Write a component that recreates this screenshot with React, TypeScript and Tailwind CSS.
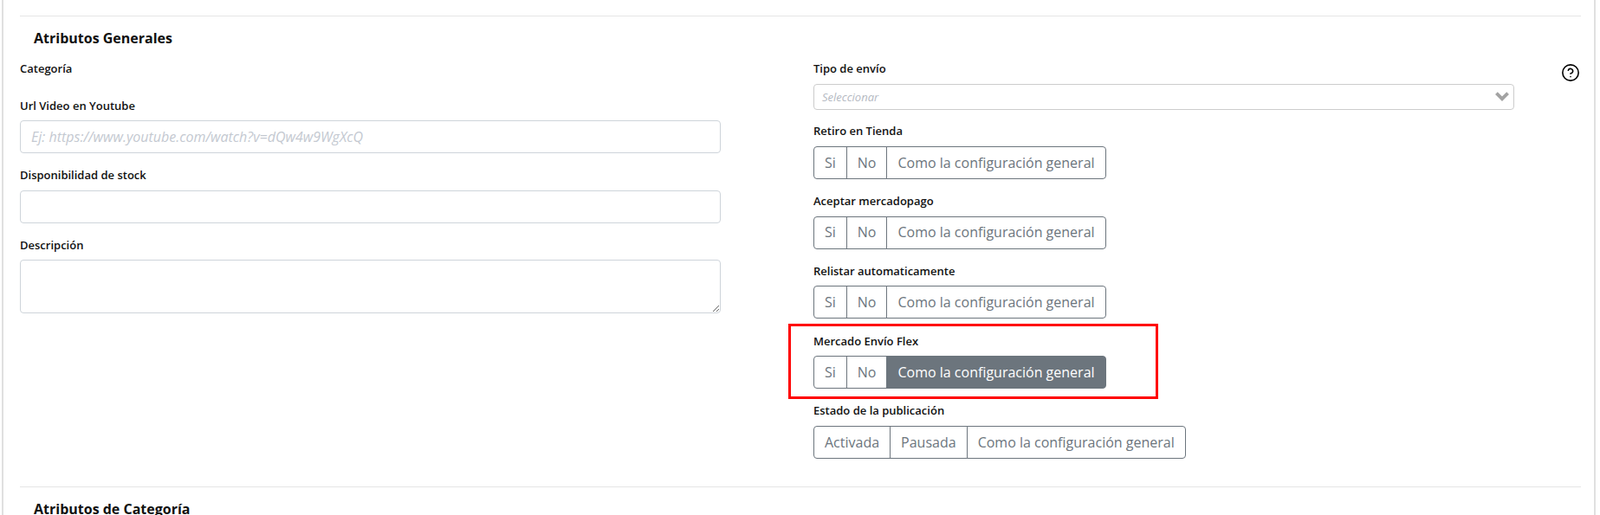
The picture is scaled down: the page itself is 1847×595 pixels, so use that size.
import { CircleHelp } from 'lucide-react';

const labelClass = 'mb-[7px] block pt-px text-[13px] font-[570] leading-[19.5px] text-[#111]';
const inputClass =
  'block h-[38px] w-full rounded-[4px] border border-[#ced4da] bg-white px-3 text-base text-[#495057] outline-none placeholder:italic placeholder:text-[#c4c9d1]';

function Field({ label, children, tight }: { label: string; children?: React.ReactNode; tight?: boolean }) {
  return (
    <div className={`flow-root ${tight ? 'mb-[14.75px]' : 'mb-[15.25px]'}`}>
      <label className={labelClass}>{label}</label>
      {children}
    </div>
  );
}

function ToggleGroup({ options, active }: { options: string[]; active?: string }) {
  return (
    <div className="inline-flex align-top">
      {options.map((option) => (
        <button
          key={option}
          className={`-ml-px h-[38px] border border-[#6c757d] px-3 pb-[0.5px] text-base first:ml-0 first:rounded-l-[4px] last:rounded-r-[4px] ${
            option === active ? 'bg-[#6c757d] text-white' : 'bg-white text-[#6c757d]'
          }`}
        >
          {option}
        </button>
      ))}
    </div>
  );
}

const SI_NO = ['Si', 'No', 'Como la configuración general'];

export default function App() {
  return (
    <div className="h-[595px] w-full overflow-hidden bg-white font-['Open_Sans',sans-serif]">
      <div className="ml-[2px] h-full w-[1840px] border-x-2 border-[#e0e0e0] pl-[19px] pr-[15px] pt-[18px]">
        <section className="border-t border-[#e5e5e5]">
          <h2 className="pl-4 pt-[13px] text-base font-bold leading-6 text-[#111]">Atributos Generales</h2>

          <div className="relative mt-[13px] flex items-start">
            <div className="mt-[-0.25px] w-[809px]">
              <Field label="Categoría" />
              <Field label="Url Video en Youtube">
                <input className={inputClass} placeholder="Ej: https://www.youtube.com/watch?v=dQw4w9WgXcQ" />
              </Field>
              <Field label="Disponibilidad de stock" tight>
                <input className={inputClass} />
              </Field>
              <Field label="Descripción">
                <textarea className="block h-[62px] w-full rounded-[4px] border border-[#ced4da] bg-white px-3 py-1.5 text-base outline-none" />
              </Field>
            </div>

            <div className="ml-[107px] w-[809px]">
              <Field label="Tipo de envío" tight>
                <div className="flex h-[30px] items-center justify-between rounded-[4px] border border-[#ccc] bg-white pl-[9px] pr-[5px]">
                  <span className="pt-0.5 text-[13px] italic text-[#b4b9c2]">Seleccionar</span>
                  <svg width="16" height="11" viewBox="0 0 16 11" fill="none" stroke="#a3a3a3" strokeWidth="3.8">
                    <path d="M1.4 1.6 8 8.2l6.6-6.6" />
                  </svg>
                </div>
              </Field>
              <Field label="Retiro en Tienda">
                <ToggleGroup options={SI_NO} />
              </Field>
              <Field label="Aceptar mercadopago">
                <ToggleGroup options={SI_NO} />
              </Field>
              <Field label="Relistar automaticamente">
                <ToggleGroup options={SI_NO} />
              </Field>
              <div className="relative">
                <Field label="Mercado Envío Flex">
                  <ToggleGroup options={SI_NO} active="Como la configuración general" />
                </Field>
                {/* red highlight drawn over the form */}
                <div className="pointer-events-none absolute left-[-29px] top-[-10px] h-[87px] w-[427px] border-[3px] border-[#ff0000]" />
              </div>
              <Field label="Estado de la publicación">
                <ToggleGroup options={['Activada', 'Pausada', 'Como la configuración general']} />
              </Field>
            </div>

            <CircleHelp className="absolute left-[1779px] top-[4px] h-[22px] w-[22px] text-black" strokeWidth={1.75} />
          </div>
        </section>

        <section className="mt-[16.5px] border-t border-[#e5e5e5]">
          <h2 className="pl-4 pt-[13px] text-base font-bold leading-6 text-[#111]">Atributos de Categoría</h2>
        </section>
      </div>
    </div>
  );
}
